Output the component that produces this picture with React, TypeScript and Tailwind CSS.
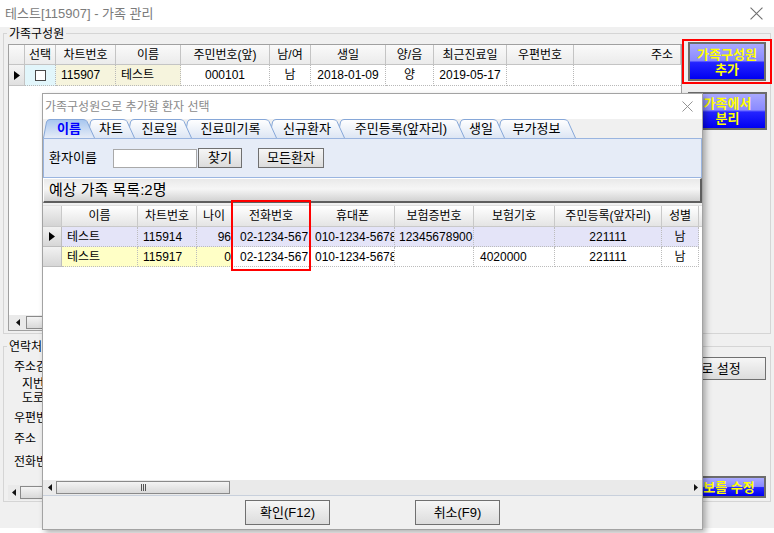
import React from 'react';

const FONT = "font-['Liberation_Sans','Noto_Sans_CJK_KR',sans-serif]";

function CloseX({ size = 12, color = '#6f6f6f' }: { size?: number; color?: string }) {
  return (
    <svg width={size} height={size} viewBox="0 0 12 12">
      <path d="M0.5 0.5L11.5 11.5M11.5 0.5L0.5 11.5" stroke={color} strokeWidth="1" />
    </svg>
  );
}

function RowArrow() {
  return (
    <svg width="6" height="9" viewBox="0 0 6 9">
      <path d="M0 0L6 4.5L0 9Z" fill="#000" />
    </svg>
  );
}

function Arrow({ dir }: { dir: 'l' | 'r' }) {
  return (
    <svg width="4" height="7" viewBox="0 0 4 7">
      <path d={dir === 'l' ? 'M4 0L0 3.5L4 7Z' : 'M0 0L4 3.5L0 7Z'} fill="#111" />
    </svg>
  );
}

// horizontal scrollbar, thumb width given as a full class string
function HScroll({ arrowW, thumb, right = true }: { arrowW: string; thumb: string; right?: boolean }) {
  return (
    <div className="h-[15px] shrink-0 flex bg-[#eaeaea]">
      <div className={`${arrowW} flex items-center justify-center`}>
        <Arrow dir="l" />
      </div>
      <div className="flex-1 flex py-[1px]">
        <div
          className={`${thumb} h-full border border-[#8a8a8a] bg-[linear-gradient(180deg,#f4f4f4,#d9d9d9)] flex items-center justify-center`}
        >
          <div className="flex gap-[1px]">
            <div className="w-[1px] h-[7px] bg-[#555]" />
            <div className="w-[1px] h-[7px] bg-[#555]" />
            <div className="w-[1px] h-[7px] bg-[#555]" />
          </div>
        </div>
      </div>
      {right && (
        <div className="w-[13px] flex items-center justify-center">
          <Arrow dir="r" />
        </div>
      )}
    </div>
  );
}

function BlueButton({ children, className }: { children: React.ReactNode; className: string }) {
  return (
    <div
      className={`${className} border-2 border-[#6c6c6c] bg-[linear-gradient(180deg,#a9a9ff_0%,#8a8aff_47%,#2424ff_53%,#0000f2_100%)] flex flex-col items-center justify-center text-[13px] font-bold leading-[15px] text-[#ffff00] whitespace-nowrap`}
    >
      {children}
    </div>
  );
}

function GrayButton({ children, className }: { children: React.ReactNode; className: string }) {
  return (
    <div
      className={`${className} border border-[#707070] bg-[linear-gradient(180deg,#f6f6f6,#dcdcdc)] flex items-center justify-center text-[13px] whitespace-nowrap`}
    >
      {children}
    </div>
  );
}

const mainCols = [
  { w: 'w-[16px]', t: '', a: 'justify-center' },
  { w: 'w-[31px]', t: '선택', a: 'justify-center' },
  { w: 'w-[60px]', t: '차트번호', a: 'justify-center' },
  { w: 'w-[65px]', t: '이름', a: 'justify-center' },
  { w: 'w-[89px]', t: '주민번호(앞)', a: 'justify-center' },
  { w: 'w-[41px]', t: '남/여', a: 'justify-center' },
  { w: 'w-[75px]', t: '생일', a: 'justify-center' },
  { w: 'w-[48px]', t: '양/음', a: 'justify-center' },
  { w: 'w-[73px]', t: '최근진료일', a: 'justify-center' },
  { w: 'w-[67px]', t: '우편번호', a: 'justify-center' },
  { w: 'w-[107px]', t: '주소', a: 'justify-end pr-[7px]' },
];

const dCols = [
  { w: 'w-[19px]', t: '', a: '' },
  { w: 'w-[76px]', t: '이름', a: 'justify-start pl-[5px]' },
  { w: 'w-[59px]', t: '차트번호', a: 'justify-start pl-[5px]' },
  { w: 'w-[35px]', t: '나이', a: 'justify-end' },
  { w: 'w-[79px]', t: '전화번호', a: 'justify-start pl-[8px]' },
  { w: 'w-[84px]', t: '휴대폰', a: 'justify-start pl-[4px]' },
  { w: 'w-[79px]', t: '보험증번호', a: 'justify-start pl-[4px]' },
  { w: 'w-[81px]', t: '보험기호', a: 'justify-start pl-[6px]' },
  { w: 'w-[107px]', t: '주민등록(앞자리)', a: 'justify-center' },
  { w: 'w-[37px]', t: '성별', a: 'justify-center' },
];

const LAV = 'bg-[#e4e4f8]';
const YEL = 'bg-[#ffffc6]';

const dRows = [
  {
    sel: true,
    cells: ['테스트', '115914', '96', '02-1234-567', '010-1234-5678', '12345678900', '', '221111', '남'],
    bg: [LAV, LAV, LAV, LAV, LAV, LAV, LAV, LAV, LAV],
  },
  {
    sel: false,
    cells: ['테스트', '115917', '0', '02-1234-567', '010-1234-5678', '', '4020000', '221111', '남'],
    bg: [YEL, YEL, YEL, 'bg-white', 'bg-white', 'bg-white', 'bg-white', 'bg-white', 'bg-white'],
  },
];

const tabs = [
  { label: '이름', w: 52, z: 'z-[9]' },
  { label: '차트', w: 48, z: 'z-[7]' },
  { label: '진료일', w: 65, z: 'z-[6]' },
  { label: '진료미기록', w: 93, z: 'z-[5]' },
  { label: '신규환자', w: 76, z: 'z-[4]' },
  { label: '주민등록(앞자리)', w: 128, z: 'z-[3]' },
  { label: '생일', w: 48, z: 'z-[2]' },
  { label: '부가정보', w: 79, z: 'z-[1]' },
];

function Tab({ label, w, z, idx }: { label: string; w: number; z: string; idx: number }) {
  const h = 19;
  const active = idx === 0;
  const shape = `M0.5 ${h} L3.5 3 Q4.3 0.5 7 0.5 L${w - 12} 0.5 Q${w - 9} 0.5 ${w - 8} 2.5 L${w - 0.5} ${h}`;
  const gid = `tabgrad${idx}`;
  return (
    <div className={`relative h-[19px] shrink-0 ${z} ${active ? '' : '-ml-[8px]'}`} style={{ width: w }}>
      <svg className="absolute inset-0" width={w} height={h} viewBox={`0 0 ${w} ${h}`}>
        <defs>
          <linearGradient id={gid} x1="0" y1="0" x2="0" y2="1">
            <stop offset="0" stopColor={active ? '#a6c6ef' : '#ffffff'} />
            <stop offset="1" stopColor={active ? '#e6ecf7' : '#dde6f4'} />
          </linearGradient>
        </defs>
        <path d={shape + ' Z'} fill={`url(#${gid})`} />
        <path d={shape} fill="none" stroke="#86a7d8" strokeWidth="1" />
      </svg>
      <div
        className={`relative h-full flex items-center justify-center pt-[1px] text-[13px] whitespace-nowrap ${
          active ? 'font-bold text-[#0000ff]' : 'text-black'
        }`}
      >
        {label}
      </div>
    </div>
  );
}

function Dialog() {
  return (
    <div className="absolute left-[42px] top-[93px] w-[661px] h-[437px] border border-[#a3a3a3] bg-[#f0f0f0] shadow-[3px_3px_6px_rgba(0,0,0,0.3)] flex flex-col">
      <div className="h-[25px] shrink-0 bg-white flex items-center justify-between pl-[2px] pr-[9px]">
        <span className="text-[12px] text-[#8a8a8a]">가족구성원으로 추가할 환자 선택</span>
        <CloseX size={11} color="#8a8a8a" />
      </div>

      {/* tab strip */}
      <div className="h-[19px] shrink-0 flex items-end">
        {tabs.map((t, i) => (
          <Tab key={t.label} label={t.label} w={t.w} z={t.z} idx={i} />
        ))}
      </div>

      {/* tab panel */}
      <div className="h-[40px] shrink-0 border border-[#9ab5e0] bg-[#e6ecf7] flex items-center pl-[5px]">
        <span className="w-[64px] text-[13px]">환자이름</span>
        <div className="w-[84px] h-[19px] bg-white border border-[#a9a9a9]" />
        <GrayButton className="ml-[1px] w-[44px] h-[20px]">찾기</GrayButton>
        <GrayButton className="ml-[16px] w-[66px] h-[20px]">모든환자</GrayButton>
      </div>

      {/* list caption */}
      <div className="h-[25px] shrink-0 border-t border-l border-white border-r-2 border-b-2 border-r-[#5e5e5e] border-b-[#5e5e5e] bg-[linear-gradient(180deg,#e9e9e9,#f6f6f6_45%,#d2d2d2)] flex items-center pl-[5px] text-[15px]">
        예상 가족 목록:2명
      </div>

      {/* grid */}
      <div className="mt-[2px] h-[275px] shrink-0 bg-white flex flex-col">
        <div className="h-[22px] flex border-t border-[#e0e0e0]">
          {dCols.map((c, i) => (
            <div
              key={i}
              className={`${c.w} shrink-0 h-full flex items-center justify-center border-r border-b border-[#c9c9c9] ${
                i === 0
                  ? 'bg-[linear-gradient(180deg,#f2f2f2,#d4d4d4)]'
                  : 'bg-[linear-gradient(180deg,#ffffff,#e4e4e4)]'
              } text-[12px] whitespace-nowrap overflow-hidden`}
            >
              {c.t}
            </div>
          ))}
          <div className="flex-1 border-b border-[#c9c9c9] bg-[linear-gradient(180deg,#ffffff,#e4e4e4)]" />
        </div>
        {dRows.map((r, ri) => (
          <div key={ri} className="h-[20px] flex">
            <div className="w-[19px] shrink-0 h-full flex items-center justify-center border-r border-b border-[#bdbdbd] bg-[linear-gradient(180deg,#f2f2f2,#d6d6d6)]">
              {r.sel && <RowArrow />}
            </div>
            {r.cells.map((v, ci) => (
              <div
                key={ci}
                className={`${dCols[ci + 1].w} ${dCols[ci + 1].a} ${r.bg[ci]} shrink-0 h-full flex items-center border-r border-b border-dotted border-[#bcbcbc] text-[12px] whitespace-nowrap overflow-hidden`}
              >
                {v}
              </div>
            ))}
          </div>
        ))}
        <div className="flex-1" />
      </div>

      <HScroll arrowW="w-[13px]" thumb="w-[174px]" />

      {/* footer */}
      <div className="flex-1 border-t border-[#c8d0dc] flex pl-[202px] pt-[4px] gap-[85px]">
        <GrayButton className="w-[85px] h-[25px]">확인(F12)</GrayButton>
        <GrayButton className="w-[85px] h-[25px]">취소(F9)</GrayButton>
      </div>

      {/* highlight around the phone column */}
      <div className="absolute left-[188px] top-[106px] w-[80px] h-[71px] border-2 border-[#ff0000]" />
    </div>
  );
}

export default function App() {
  return (
    <div className={`relative w-[774px] h-[533px] overflow-hidden bg-white text-[12px] text-black ${FONT}`}>
      {/* title bar */}
      <div className="h-[27px] flex items-center justify-between pl-[5px] pr-[11px]">
        <span className="text-[13px] text-[#7b7b7b]">테스트[115907] - 가족 관리</span>
        <CloseX size={13} />
      </div>

      <div className="h-[501px] bg-[#f0f0f0] pt-[6px] pl-[3px] pr-[3px] flex flex-col">
        {/* 가족구성원 group */}
        <div className="relative h-[301px] shrink-0 border border-[#d5d5d5] pt-[10px] pl-[4px] flex">
          <div className="absolute -top-[7px] left-[3px] bg-[#f0f0f0] px-[2px] text-[12px] leading-[14px]">가족구성원</div>

          <div className="w-[674px] h-[287px] shrink-0 border border-[#a0a0a0] bg-white flex flex-col">
            <div className="h-[20px] flex">
              {mainCols.map((c, i) => (
                <div
                  key={i}
                  className={`${c.w} ${c.a} shrink-0 h-full flex items-center border-r border-b border-[#c4c4c4] bg-[linear-gradient(180deg,#fafafa,#ebebeb)] text-[12px] whitespace-nowrap`}
                >
                  {c.t}
                </div>
              ))}
            </div>
            <div className="h-[21px] flex">
              <div className="w-[16px] shrink-0 flex items-center justify-center border-r border-b border-[#c4c4c4] bg-[linear-gradient(180deg,#f4f4f4,#e0e0e0)]">
                <RowArrow />
              </div>
              <div className="w-[31px] shrink-0 flex items-center justify-center border-r border-b border-dotted border-[#b8b8b8] bg-[#e2f6fb]">
                <div className="w-[11px] h-[11px] border border-[#4a4a4a] bg-white" />
              </div>
              <div className="w-[60px] shrink-0 flex items-center pl-[5px] border-r border-b border-dotted border-[#b8b8b8] bg-[#f6f4dd]">115907</div>
              <div className="w-[65px] shrink-0 flex items-center pl-[5px] border-r border-b border-dotted border-[#b8b8b8] bg-[#f6f4dd]">테스트</div>
              <div className="w-[89px] shrink-0 flex items-center justify-center border-r border-b border-dotted border-[#b8b8b8]">000101</div>
              <div className="w-[41px] shrink-0 flex items-center justify-center border-r border-b border-dotted border-[#b8b8b8]">남</div>
              <div className="w-[75px] shrink-0 flex items-center justify-center border-r border-b border-dotted border-[#b8b8b8]">2018-01-09</div>
              <div className="w-[48px] shrink-0 flex items-center justify-center border-r border-b border-dotted border-[#b8b8b8]">양</div>
              <div className="w-[73px] shrink-0 flex items-center justify-center border-r border-b border-dotted border-[#b8b8b8]">2019-05-17</div>
              <div className="w-[67px] shrink-0 border-r border-b border-dotted border-[#b8b8b8]" />
              <div className="w-[107px] shrink-0 border-b border-dotted border-[#b8b8b8]" />
            </div>
            <div className="flex-1" />
            <HScroll arrowW="w-[17px]" thumb="w-[150px]" right={false} />
          </div>

          <div className="-mt-[5px] flex flex-col">
            <div className="w-[90px] h-[45px] border-2 border-[#ff0000] flex items-center pl-[4px]">
              <BlueButton className="w-[78px] h-[39px]">
                <span>가족구성원</span>
                <span>추가</span>
              </BlueButton>
            </div>
            <BlueButton className="mt-[8px] ml-[6px] w-[79px] h-[38px]">
              <span>가족에서</span>
              <span>분리</span>
            </BlueButton>
          </div>
        </div>

        {/* 연락처 group */}
        <div className="relative mt-[12px] h-[156px] shrink-0 border border-[#d5d5d5] flex justify-between">
          <div className="absolute -top-[7px] left-[3px] bg-[#f0f0f0] px-[2px] text-[12px] leading-[14px]">연락처</div>
          <div className="flex flex-col text-[12px] leading-[14px] pt-[13px]">
            <span className="pl-[10px]">주소검색</span>
            <span className="pl-[18px] mt-[3px] leading-[14px]">지번</span>
            <span className="pl-[18px] leading-[14px]">도로</span>
            <span className="pl-[10px] mt-[6px]">우편번호</span>
            <span className="pl-[10px] mt-[7px]">주소</span>
            <span className="pl-[10px] mt-[9px]">전화번호</span>
            <div className="mt-[16px] ml-[4px] w-[120px]">
              <HScroll arrowW="w-[12px]" thumb="w-[90px]" right={false} />
            </div>
          </div>
          <div className="flex flex-col items-end pr-[4px] pt-[10px]">
            <GrayButton className="w-[126px] h-[23px]">보호자로 설정</GrayButton>
            <BlueButton className="mt-[96px] w-[110px] h-[22px]">가족정보를 수정</BlueButton>
          </div>
        </div>
      </div>

      <Dialog />
    </div>
  );
}
